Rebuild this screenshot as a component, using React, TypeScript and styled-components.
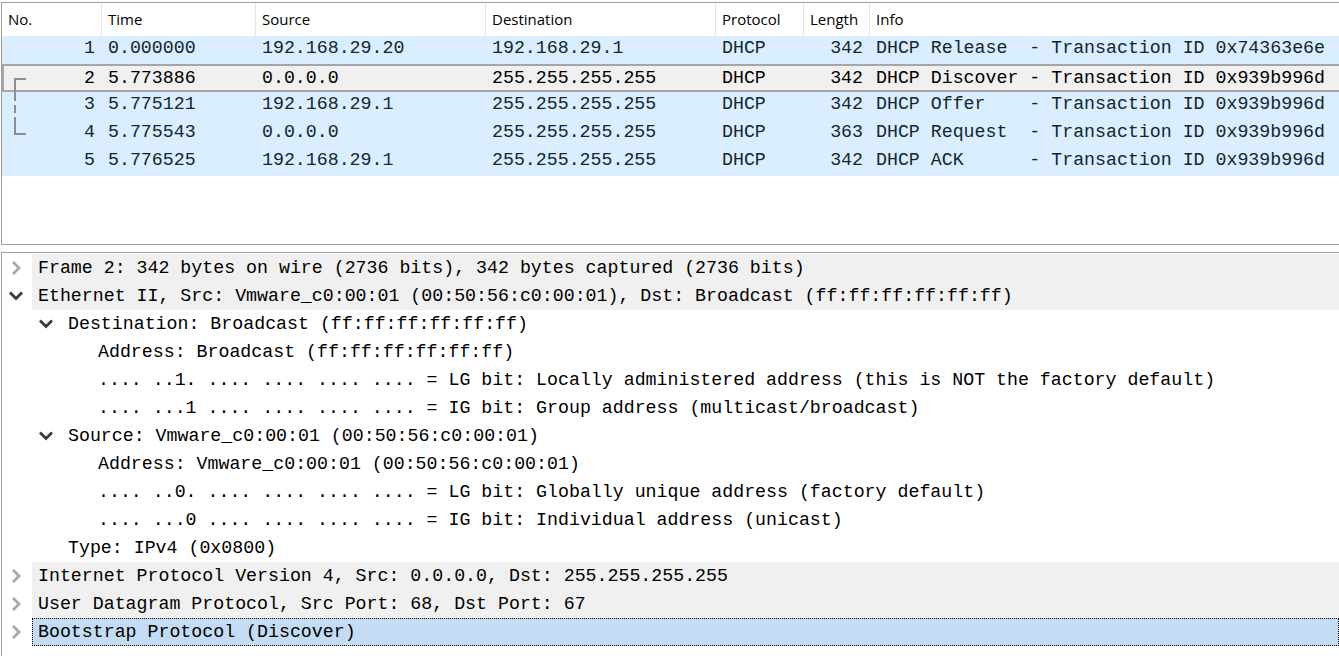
import React from "react"
import styled, { createGlobalStyle } from "styled-components"

const GlobalStyle = createGlobalStyle`
  html, body {
    margin: 0;
    padding: 0;
    background: #ffffff;
    overflow: hidden;
  }
  body {
    padding: 2px 0 0 1px;
  }
`

const MONO = `"Liberation Mono", "DejaVu Sans Mono", monospace`
const SANS = `"Open Sans", "Noto Sans", sans-serif`
const MONO_SIZE = "18.25px"

type Align = "left" | "right"

type Column = {
  title: string
  width: number | string
  align: Align
}

const columns: Column[] = [
  { title: "No.", width: 99, align: "right" },
  { title: "Time", width: 154, align: "left" },
  { title: "Source", width: 230, align: "left" },
  { title: "Destination", width: 230, align: "left" },
  { title: "Protocol", width: 88, align: "left" },
  { title: "Length", width: 66, align: "right" },
  { title: "Info", width: "1fr", align: "left" },
]

const gridTemplate = columns
  .map(c => (typeof c.width === "number" ? `${c.width}px` : c.width))
  .join(" ")

type Packet = {
  no: number
  time: string
  src: string
  dst: string
  proto: string
  len: number
  info: string
}

const packets: Packet[] = [
  { no: 1, time: "0.000000", src: "192.168.29.20", dst: "192.168.29.1", proto: "DHCP", len: 342, info: "DHCP Release  - Transaction ID 0x74363e6e" },
  { no: 2, time: "5.773886", src: "0.0.0.0", dst: "255.255.255.255", proto: "DHCP", len: 342, info: "DHCP Discover - Transaction ID 0x939b996d" },
  { no: 3, time: "5.775121", src: "192.168.29.1", dst: "255.255.255.255", proto: "DHCP", len: 342, info: "DHCP Offer    - Transaction ID 0x939b996d" },
  { no: 4, time: "5.775543", src: "0.0.0.0", dst: "255.255.255.255", proto: "DHCP", len: 363, info: "DHCP Request  - Transaction ID 0x939b996d" },
  { no: 5, time: "5.776525", src: "192.168.29.1", dst: "255.255.255.255", proto: "DHCP", len: 342, info: "DHCP ACK      - Transaction ID 0x939b996d" },
]

const SELECTED_PACKET = 2

type TreeItem = {
  level: number
  text: string
  expand?: "open" | "closed"
  selected?: boolean
}

const tree: TreeItem[] = [
  { level: 0, expand: "closed", text: "Frame 2: 342 bytes on wire (2736 bits), 342 bytes captured (2736 bits)" },
  { level: 0, expand: "open", text: "Ethernet II, Src: Vmware_c0:00:01 (00:50:56:c0:00:01), Dst: Broadcast (ff:ff:ff:ff:ff:ff)" },
  { level: 1, expand: "open", text: "Destination: Broadcast (ff:ff:ff:ff:ff:ff)" },
  { level: 2, text: "Address: Broadcast (ff:ff:ff:ff:ff:ff)" },
  { level: 2, text: ".... ..1. .... .... .... .... = LG bit: Locally administered address (this is NOT the factory default)" },
  { level: 2, text: ".... ...1 .... .... .... .... = IG bit: Group address (multicast/broadcast)" },
  { level: 1, expand: "open", text: "Source: Vmware_c0:00:01 (00:50:56:c0:00:01)" },
  { level: 2, text: "Address: Vmware_c0:00:01 (00:50:56:c0:00:01)" },
  { level: 2, text: ".... ..0. .... .... .... .... = LG bit: Globally unique address (factory default)" },
  { level: 2, text: ".... ...0 .... .... .... .... = IG bit: Individual address (unicast)" },
  { level: 1, text: "Type: IPv4 (0x0800)" },
  { level: 0, expand: "closed", text: "Internet Protocol Version 4, Src: 0.0.0.0, Dst: 255.255.255.255" },
  { level: 0, expand: "closed", text: "User Datagram Protocol, Src Port: 68, Dst Port: 67" },
  { level: 0, expand: "closed", selected: true, text: "Bootstrap Protocol (Discover)" },
]

const Window = styled.div`
  display: flex;
  flex-direction: column;
  height: 654px;
`

const PacketList = styled.div`
  height: 241px;
  border: 1px solid #a0a0a0;
  border-right: none;
  background: #ffffff;
  display: flex;
  flex-direction: column;
`

const HeaderRow = styled.div`
  display: grid;
  grid-template-columns: ${gridTemplate};
  height: 33px;
  font-family: ${SANS};
  font-size: 15px;
  color: #000;
`

const HeaderCell = styled.div<{ $first?: boolean }>`
  display: flex;
  align-items: center;
  padding: 0 6px 1px 6px;
  border-left: ${p => (p.$first ? "none" : "1px solid #e5e5e5")};
  white-space: nowrap;
  overflow: hidden;
`

const Rows = styled.div`
  position: relative;
`

const PacketRow = styled.div<{ $selected?: boolean }>`
  display: grid;
  grid-template-columns: ${gridTemplate};
  height: 28px;
  background: ${p => (p.$selected ? "#f0f0f0" : "#daeeff")};
  box-shadow: ${p => (p.$selected ? "inset 0 2px 0 #a6a6a6, inset 0 -2px 0 #a6a6a6, inset 2px 0 0 #a6a6a6" : "none")};
  color: ${p => (p.$selected ? "#000000" : "#12272e")};
  font-family: ${MONO};
  font-size: ${MONO_SIZE};
`

const Cell = styled.div<{ $align: Align; $first?: boolean; $lift?: boolean }>`
  display: flex;
  align-items: center;
  justify-content: ${p => (p.$align === "right" ? "flex-end" : "flex-start")};
  padding: 0 6px ${p => (p.$lift ? 4 : 0)}px ${p => (p.$first ? 6 : 7)}px;
  white-space: pre;
  overflow: hidden;
`

const Bracket = styled.svg`
  position: absolute;
  left: 0;
  top: 0;
  pointer-events: none;
`

const Splitter = styled.div`
  height: 7px;
  background: #ffffff;
`

const DetailTree = styled.div`
  flex: 1;
  border-top: 1px solid #a0a0a0;
  border-left: 1px solid #a0a0a0;
  padding-top: 1px;
  background: #ffffff;
  overflow: hidden;
`

const TreeRow = styled.div`
  display: flex;
  height: 28px;
  font-family: ${MONO};
  font-size: ${MONO_SIZE};
  color: #000;
`

const Indent = styled.div<{ $level: number }>`
  flex: none;
  width: ${p => p.$level * 30}px;
`

const Toggle = styled.div`
  flex: none;
  width: 30px;
  padding-right: 3px;
  box-sizing: border-box;
  display: flex;
  align-items: center;
  justify-content: center;
`

const Label = styled.div<{ $top?: boolean; $selected?: boolean }>`
  flex: 1;
  display: flex;
  align-items: center;
  padding-left: 6px;
  white-space: pre;
  overflow: hidden;
  background: ${p => (p.$selected ? "#c4dcf3" : p.$top ? "#f0f0f0" : "transparent")};
  outline: ${p => (p.$selected ? "1px dotted #000" : "none")};
  outline-offset: -1px;
`

const Chevron: React.FC<{ open?: boolean }> = ({ open }) =>
  open ? (
    <svg width="16" height="12" viewBox="0 0 16 12">
      <path d="M2 2.5 L8 8.5 L14 2.5" fill="none" stroke="#3a3a3a" strokeWidth="2.8" />
    </svg>
  ) : (
    <svg width="12" height="16" viewBox="0 0 12 16">
      <path d="M3 2 L9 8 L3 14" fill="none" stroke="#a8a8a8" strokeWidth="2.8" />
    </svg>
  )

const cellValues = (p: Packet) => [
  String(p.no),
  p.time,
  p.src,
  p.dst,
  p.proto,
  String(p.len),
  p.info,
]

export default function App() {
  return (
    <>
      <GlobalStyle />
      <Window>
        <PacketList>
          <HeaderRow>
            {columns.map((c, i) => (
              <HeaderCell key={c.title} $first={i === 0}>
                {c.title}
              </HeaderCell>
            ))}
          </HeaderRow>
          <Rows>
            {packets.map(p => {
              const selected = p.no === SELECTED_PACKET
              return (
                <PacketRow key={p.no} $selected={selected}>
                  {cellValues(p).map((v, i) => (
                    <Cell
                      key={i}
                      $align={columns[i].align}
                      $first={i === 0}
                      $lift={!selected}
                    >
                      {v}
                    </Cell>
                  ))}
                </PacketRow>
              )
            })}
            {/* conversation bracket linking packets 2-4 */}
            <Bracket width="40" height="140">
              <g stroke="#8e8e8e" strokeWidth="2" fill="none">
                <path d="M24 43 H13 V57" />
                <path d="M13 57 V82" strokeDasharray="8 4" />
                <path d="M13 82 V98 H24" />
              </g>
            </Bracket>
          </Rows>
        </PacketList>
        <Splitter />
        <DetailTree>
          {tree.map((t, i) => (
            <TreeRow key={i}>
              <Indent $level={t.level} />
              <Toggle>{t.expand && <Chevron open={t.expand === "open"} />}</Toggle>
              <Label $top={t.level === 0} $selected={t.selected}>
                {t.text}
              </Label>
            </TreeRow>
          ))}
        </DetailTree>
      </Window>
    </>
  )
}
